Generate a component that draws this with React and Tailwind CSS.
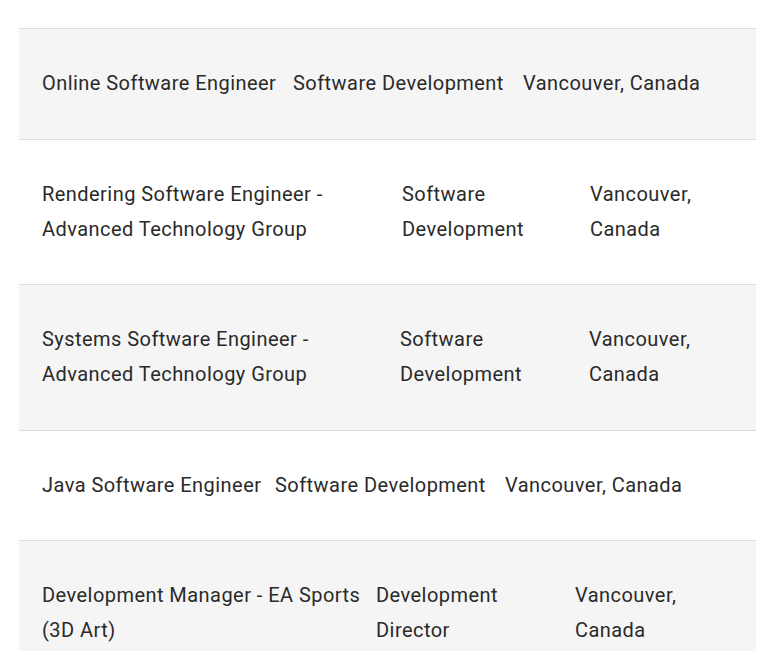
import React from 'react'

const jobs = [
  { title: 'Online Software Engineer', dept: 'Software Development', loc: 'Vancouver, Canada', w: ['w-[251px]', 'w-[230px]', ''] },
  { title: 'Rendering Software Engineer - Advanced Technology Group', dept: 'Software Development', loc: 'Vancouver, Canada', w: ['w-[360px] pr-4', 'w-[188px] pr-4', 'w-[130px]'] },
  { title: 'Systems Software Engineer - Advanced Technology Group', dept: 'Software Development', loc: 'Vancouver, Canada', w: ['w-[358px] pr-4', 'w-[189px] pr-4', 'w-[130px]'] },
  { title: 'Java Software Engineer', dept: 'Software Development', loc: 'Vancouver, Canada', w: ['w-[233px]', 'w-[230px]', ''] },
  { title: 'Development Manager - EA Sports (3D Art)', dept: 'Development Director', loc: 'Vancouver, Canada', w: ['w-[334px]', 'w-[199px] pr-4', 'w-[130px]'] },
]

function JobRow({ job, shaded }){
  return (
    <div className={`flex items-start border-t border-[#dcdcdc] pl-[23px] pt-[37px] pb-[37.5px] ${shaded ? 'bg-[#f5f5f5]' : 'bg-white'}`}>
      <div className={`${job.w[0]} shrink-0`}>{job.title}</div>
      <div className={`${job.w[1]} shrink-0`}>{job.dept}</div>
      <div className={`${job.w[2]} shrink-0`}>{job.loc}</div>
    </div>
  )
}

export default function App(){
  return (
    <div className="min-h-screen bg-white pt-[28px] font-['Roboto',sans-serif] text-[20px] leading-[35px] tracking-[0.45px] text-[#2a2a2a]">
      <div className="mx-[19px] w-[737px]">
        {jobs.map((job, i) => (
          <JobRow key={i} job={job} shaded={i % 2 === 0} />
        ))}
      </div>
    </div>
  )
}
